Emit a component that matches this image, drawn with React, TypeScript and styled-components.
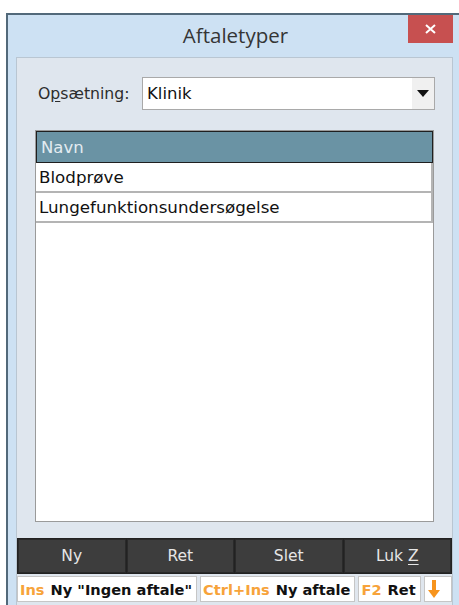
import React from 'react'
import styled, { createGlobalStyle } from 'styled-components'

const GlobalStyle = createGlobalStyle`
  html, body {
    margin: 0;
    padding: 0;
    background: #ffffff;
  }
  body {
    font-family: 'DejaVu Sans', Verdana, sans-serif;
  }
`

const Page = styled.div`
  height: 605px;
  overflow: hidden;
  padding: 13px 0 0 6px;
  box-sizing: border-box;
`

const Window = styled.div`
  height: 600px;
  background: #cde1f3;
  border-top: 2px solid #52697a;
  border-left: 2px solid #52697a;
  display: flex;
  flex-direction: column;
`

const TitleBar = styled.div`
  height: 42px;
  display: grid;
  grid-template-columns: 1fr auto 1fr;
  align-items: start;
`

const Title = styled.div`
  grid-column: 2;
  font-family: 'Open Sans', 'Noto Sans', sans-serif;
  font-size: 20.5px;
  color: #353535;
  padding-top: 6px;
  padding-left: 4px;
`

const CloseButton = styled.div`
  grid-column: 3;
  justify-self: end;
  width: 45px;
  height: 28px;
  margin-right: 6px;
  background: #c75050;
  color: #fff;
  display: flex;
  align-items: center;
  justify-content: center;
`

const Panel = styled.div`
  flex: 1;
  margin: 0 6px 0 8px;
  background: #dfe6ee;
  border: 1px solid #b9c6d2;
  border-bottom: none;
  display: flex;
  flex-direction: column;
  padding: 19px 0 0 0;
`

const SetupRow = styled.div`
  display: flex;
  align-items: center;
  padding-left: 21px;
  gap: 9px;
`

const Label = styled.label`
  font-size: 15.7px;
  color: #2c2c2c;
  width: 95px;
  white-space: nowrap;

  & u {
    text-underline-offset: 2px;
  }
`

const Combo = styled.div`
  width: 291px;
  height: 31px;
  background: #ffffff;
  border: 1px solid #a9a9a9;
  display: flex;
  align-items: stretch;
`

const ComboText = styled.div`
  flex: 1;
  font-size: 16.5px;
  color: #111;
  display: flex;
  align-items: center;
  padding-left: 4px;
`

const ComboArrow = styled.div`
  width: 22px;
  background: #f0f0f0;
  display: flex;
  align-items: center;
  justify-content: center;
`

const Grid = styled.div`
  margin: 20px 18px 0 18px;
  height: 390px;
  background: #ffffff;
  border: 1px solid #9a9a9a;
  display: flex;
  flex-direction: column;
`

const HeaderCell = styled.div`
  height: 30px;
  background: #6a93a4;
  border: 1px solid #1f1f1f;
  color: #e3ecf1;
  font-size: 16.5px;
  display: flex;
  align-items: center;
  padding-left: 4px;
`

const Row = styled.div`
  height: 28px;
  border-bottom: 2px solid #b4b4b4;
  border-right: 2px solid #b4b4b4;
  color: #111;
  font-size: 16.7px;
  display: flex;
  align-items: center;
  padding-left: 3px;
`

const ButtonBar = styled.div`
  margin-top: 16px;
  display: grid;
  grid-template-columns: repeat(4, 1fr);
  background: #222;
  border: 1px solid #222;
  gap: 1px;
  height: 34px;
`

const Button = styled.div`
  background: #3d3d3d;
  border: 1px solid #2a2a2a;
  color: #e6e6e6;
  font-size: 15.5px;
  display: flex;
  align-items: center;
  justify-content: center;
  white-space: pre;

  & u {
    text-underline-offset: 3px;
  }
`

const StatusBar = styled.div`
  margin-top: 2px;
  display: flex;
  gap: 3px;
  height: 26px;
`

const Hint = styled.div<{ $grow?: boolean }>`
  background: #ffffff;
  border: 1px solid #c6c6c6;
  display: flex;
  align-items: center;
  gap: 6px;
  padding: 0 4px 0 2px;
  font-size: 14.6px;
  font-weight: bold;
  color: #111;
  white-space: nowrap;
  flex: ${p => (p.$grow ? 1 : 'none')};
`

const Key = styled.span`
  color: #f7a33a;
`

const ArrowDown = () => (
  <svg width="14" height="20" viewBox="0 0 14 20">
    <path d="M5 1h4v10h4l-6 8-6-8h4z" fill="#f7941d" />
  </svg>
)

export default function App () {
  return (
    <Page>
      <GlobalStyle />
      <Window>
        <TitleBar>
          <Title>Aftaletyper</Title>
          <CloseButton>
            <svg width="11" height="10" viewBox="0 0 11 10">
              <path d="M1 1l9 8M10 1l-9 8" stroke="#fff" strokeWidth="2" />
            </svg>
          </CloseButton>
        </TitleBar>
        <Panel>
          <SetupRow>
            <Label>O<u>p</u>sætning:</Label>
            <Combo>
              <ComboText>Klinik</ComboText>
              <ComboArrow>
                <svg width="12" height="7" viewBox="0 0 12 7">
                  <path d="M0 0h12L6 7z" fill="#111" />
                </svg>
              </ComboArrow>
            </Combo>
          </SetupRow>
          <Grid>
            <HeaderCell>Navn</HeaderCell>
            <Row>Blodprøve</Row>
            <Row>Lungefunktionsundersøgelse</Row>
          </Grid>
          <ButtonBar>
            <Button>Ny</Button>
            <Button>Ret</Button>
            <Button>Slet</Button>
            <Button><span>Luk <u>Z</u></span></Button>
          </ButtonBar>
          <StatusBar>
            <Hint><Key>Ins</Key>Ny "Ingen aftale"</Hint>
            <Hint><Key>Ctrl+Ins</Key>Ny aftale</Hint>
            <Hint><Key>F2</Key>Ret</Hint>
            <Hint $grow><ArrowDown /></Hint>
          </StatusBar>
        </Panel>
      </Window>
    </Page>
  )
}
